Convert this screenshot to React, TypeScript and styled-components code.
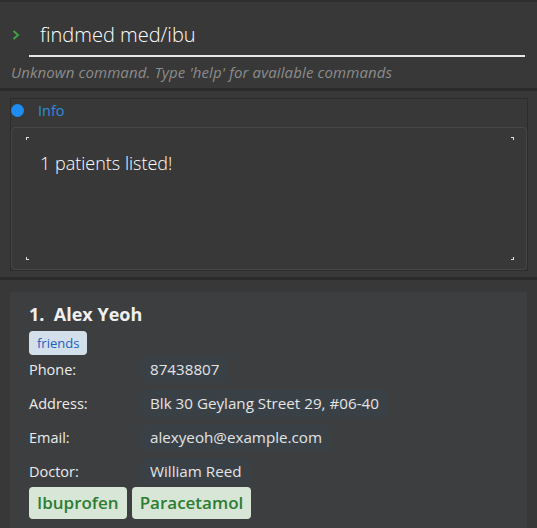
import React from "react";
import styled, { createGlobalStyle } from "styled-components";

const GlobalStyle = createGlobalStyle`
  html, body { margin: 0; padding: 0; background: #383838; }
  body { font-family: "Open Sans", "Noto Sans", sans-serif; color: #e6e6e6; overflow: hidden; }
  * { box-sizing: border-box; }
`;

const Page = styled.div`
  width: 537px;
  height: 528px;
  display: flex;
  flex-direction: column;
  background: #383838;
`;

const CommandSection = styled.section`
  height: 88px;
  padding: 17px 12px 0 11px;
  border-top: 2px solid #2e2e2e;
  display: flex;
  flex-direction: column;
`;

const PromptRow = styled.div`
  display: flex;
  align-items: flex-start;
`;

const PromptIcon = styled.svg`
  width: 8px;
  height: 10px;
  margin-top: 11px;
  margin-left: 1px;
  margin-right: 9px;
  flex: none;
`;

const CommandInput = styled.div`
  flex: 1;
  height: 38px;
  padding: 0 0 6px 11px;
  line-height: 31px;
  font-size: 20px;
  font-weight: 300;
  color: #ffffff;
  border-bottom: 2px solid #e8e8e8;
`;

const ResultText = styled.div`
  margin-top: 5px;
  font-size: 15px;
  letter-spacing: 0.12px;
  line-height: 20px;
  font-style: italic;
  color: #8c8c8c;
`;

const Separator = styled.div`
  height: 3px;
  background: #2b2b2b;
  flex: none;
`;

const InfoSection = styled.section`
  height: 186px;
  padding: 7px 9px 6px 10px;
`;

const InfoPanel = styled.div`
  height: 100%;
  border: 1px solid #2c2c2c;
  display: flex;
  flex-direction: column;
`;

const InfoHeader = styled.div`
  height: 28px;
  padding-bottom: 6px;
  display: flex;
  align-items: center;
  gap: 14px;
`;

const Dot = styled.span`
  width: 13px;
  height: 13px;
  border-radius: 50%;
  background: #1e8cf0;
  flex: none;
`;

const InfoLabel = styled.span`
  font-size: 14.5px;
  color: #2a8fe0;
`;

const MessageBox = styled.div`
  position: relative;
  flex: 1;
  border: 1px solid #474747;
  border-radius: 4px;
  background: #383838;
  padding: 22px 28px;
  font-size: 18px;
  font-weight: 300;
  line-height: 26px;
  color: #ffffff;
`;

const Corner = styled.span<{ $v: "top" | "bottom"; $h: "left" | "right" }>`
  position: absolute;
  width: 3px;
  height: 3px;
  ${(p) => p.$v}: 9px;
  ${(p) => p.$h}: ${(p) => (p.$h === "left" ? "14px" : "12px")};
  border-${(p) => p.$v}: 1px solid #e0e0e0;
  border-${(p) => p.$h}: 1px solid #e0e0e0;
`;

const ListSection = styled.section`
  flex: 1;
  padding: 12px 10px 0 10px;
  overflow: hidden;
`;

const Card = styled.article`
  background: #3d3e40;
  padding: 10px 19px 12px 19px;
  display: flex;
  flex-direction: column;
`;

const Name = styled.div`
  font-size: 18px;
  font-weight: 700;
  line-height: 24px;
  color: #f0f0f0;
`;

const TagRow = styled.div`
  display: flex;
  gap: 5px;
  margin-top: 5px;
`;

const Tag = styled.span`
  height: 24px;
  line-height: 24px;
  padding: 0 8px;
  border-radius: 4px;
  background: #d3dfea;
  color: #1a5fbf;
  font-size: 13px;
`;

const Fields = styled.div`
  display: grid;
  grid-template-columns: 113px auto;
  justify-content: start;
  row-gap: 7px;
  margin-top: 1px;
`;

const Label = styled.span`
  font-size: 14.5px;
  line-height: 27px;
  color: #ececec;
`;

const Value = styled.span`
  justify-self: start;
  height: 27px;
  line-height: 27px;
  padding: 0 8px;
  border-radius: 3px;
  background: #394147;
  font-size: 15.2px;
  color: #e4e4e4;
`;

const MedRow = styled.div`
  display: flex;
  gap: 5px;
  margin-top: 2px;
`;

const MedTag = styled.span`
  height: 32px;
  line-height: 32px;
  padding: 0 8px;
  border-radius: 4px;
  background: #d8e6d8;
  color: #2e7d32;
  font-size: 17px;
  font-weight: 600;
`;

const fields: [string, string][] = [
  ["Phone:", "87438807"],
  ["Address:", "Blk 30 Geylang Street 29, #06-40"],
  ["Email:", "alexyeoh@example.com"],
  ["Doctor:", "William Reed"],
];

export default function App() {
  return (
    <Page>
      <GlobalStyle />
      <CommandSection>
        <PromptRow>
          <PromptIcon viewBox="0 0 8 10">
            <polyline points="1.5,1 6,5 1.5,9" fill="none" stroke="#3fa046" strokeWidth="2" />
          </PromptIcon>
          <CommandInput>findmed med/ibu</CommandInput>
        </PromptRow>
        <ResultText>Unknown command. Type 'help' for available commands</ResultText>
      </CommandSection>
      <Separator />
      <InfoSection>
        <InfoPanel>
          <InfoHeader>
            <Dot />
            <InfoLabel>Info</InfoLabel>
          </InfoHeader>
          <MessageBox>
            <Corner $v="top" $h="left" />
            <Corner $v="top" $h="right" />
            <Corner $v="bottom" $h="left" />
            <Corner $v="bottom" $h="right" />
            1 patients listed!
          </MessageBox>
        </InfoPanel>
      </InfoSection>
      <Separator />
      <ListSection>
        <Card>
          <Name>1.&nbsp; Alex Yeoh</Name>
          <TagRow>
            <Tag>friends</Tag>
          </TagRow>
          <Fields>
            {fields.map(([l, v]) => (
              <React.Fragment key={l}>
                <Label>{l}</Label>
                <Value>{v}</Value>
              </React.Fragment>
            ))}
          </Fields>
          <MedRow>
            <MedTag>Ibuprofen</MedTag>
            <MedTag>Paracetamol</MedTag>
          </MedRow>
        </Card>
      </ListSection>
    </Page>
  );
}
